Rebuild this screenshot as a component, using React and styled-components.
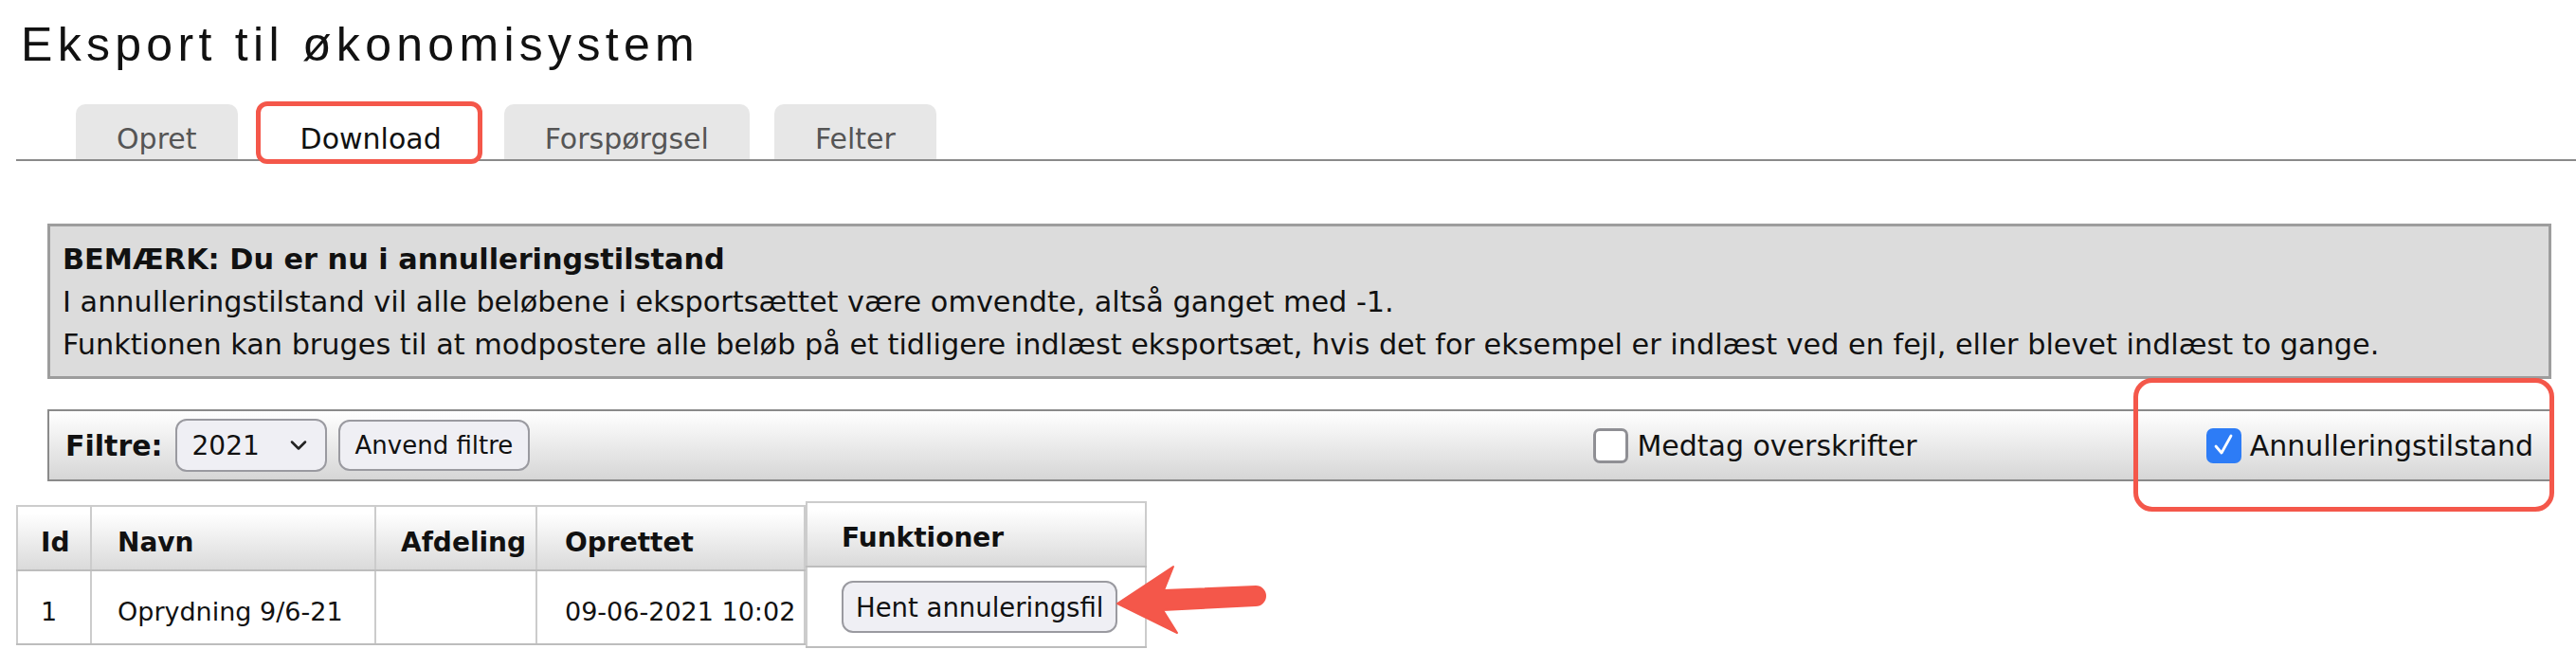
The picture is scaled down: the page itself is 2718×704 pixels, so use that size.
import React from "react";
import styled, { createGlobalStyle, css } from "styled-components";
import { ChevronDown } from "lucide-react";

const GlobalStyle = createGlobalStyle`
  html, body { margin: 0; padding: 0; background: #fff; }
  body { font-family: "DejaVu Sans", Verdana, sans-serif; color: #111; }
  * { box-sizing: border-box; }
`;

const RED = "#f4574a";

const Page = styled.div`
  width: 2718px;
  padding-left: 17px;
`;

const Title = styled.h1`
  margin: 22px 0 0 5px;
  font: 400 50px/50px "Liberation Sans", Arial, sans-serif;
  letter-spacing: 5.3px;
  color: #111;
`;

const TabBar = styled.nav`
  margin-top: 38px;
  display: flex;
  gap: 26px;
  padding-left: 63px;
  border-bottom: 2px solid #8a8a8a;
`;

const Tab = styled.div`
  position: relative;
  height: 58px;
  display: flex;
  align-items: flex-end;
  padding: 0 ${(p) => (p.$active ? 40 : 43)}px 6px;
  font-size: 30px;
  line-height: 30px;
  border-radius: 10px 10px 0 0;
  background: ${(p) => (p.$active ? "#fff" : "#e7e7e7")};
  color: ${(p) => (p.$active ? "#111" : "#555")};
  ${(p) =>
    p.$active &&
    css`
      &::after {
        content: "";
        position: absolute;
        inset: -3px -3px -5px -7px;
        border: 5px solid ${RED};
        border-radius: 12px;
      }
    `}
`;

const Notice = styled.div`
  margin: 66px 26px 0 33px;
  border: 3px solid #9d9d9d;
  background: #dcdcdc;
  padding: 12px 13px 11px;
  font-size: 30.3px;
  line-height: 45px;
`;

const NoticeLine = styled.div`
  font-weight: ${(p) => (p.$bold ? 700 : 400)};
  white-space: nowrap;
`;

const FilterBar = styled.div`
  position: relative;
  margin: 32px 26px 0 33px;
  height: 76px;
  border: 2px solid #8a8a8a;
  background: linear-gradient(#ffffff, #d6d6d6);
  display: flex;
  align-items: center;
  padding: 0 17px;
  font-size: 30px;
`;

const FilterLabel = styled.span`
  font-weight: 700;
`;

const SelectBox = styled.div`
  margin-left: 13px;
  width: 160px;
  height: 56px;
  border: 2px solid #9a9aa0;
  border-radius: 12px;
  background: #efeff4;
  display: flex;
  align-items: center;
  justify-content: space-between;
  padding: 0 14px 0 16px;
  font-size: 28px;
`;

const Button = styled.button`
  height: ${(p) => p.$h || 54}px;
  margin-left: ${(p) => p.$ml || 0}px;
  padding: 0 ${(p) => p.$px || 14}px;
  border: 2px solid #9a9aa0;
  border-radius: 12px;
  background: #efeff4;
  font-family: "DejaVu Sans", Verdana, sans-serif;
  font-size: ${(p) => p.$fs || 26}px;
  color: #111;
  white-space: nowrap;
`;

const Options = styled.div`
  margin-left: auto;
  display: flex;
  align-items: center;
  gap: 305px;
`;

const CheckLabel = styled.label`
  display: flex;
  align-items: center;
  gap: 9px;
  font-size: 30px;
`;

const CheckBox = styled.span`
  width: 37px;
  height: 37px;
  border-radius: 7px;
  display: flex;
  align-items: center;
  justify-content: center;
  border: ${(p) => (p.$checked ? "none" : "3px solid #8f8f94")};
  background: ${(p) => (p.$checked ? "#2d7cf6" : "#fff")};
`;

const Highlight = styled.div`
  position: absolute;
  right: -5px;
  top: -35px;
  width: 444px;
  height: 141px;
  border: 5px solid ${RED};
  border-radius: 20px;
  pointer-events: none;
`;

const TableArea = styled.div`
  position: relative;
  margin-top: 21px;
  display: flex;
  align-items: center;
  width: max-content;
`;

const Table = styled.table`
  border-collapse: collapse;
  table-layout: fixed;
  font-size: 27px;
  background: #fff;
`;

const Th = styled.th`
  height: ${(p) => p.$h || 68}px;
  padding: ${(p) => p.$pt || 0}px ${(p) => p.$pr ?? 8}px 0 ${(p) => p.$pl || 24}px;
  text-align: left;
  font-size: 28px;
  font-weight: 700;
  white-space: nowrap;
  overflow: hidden;
  background: linear-gradient(#ffffff 10%, #dadada);
  border: 2px solid #cccccc;
  border-bottom-color: #bdbdbd;
`;

const Td = styled.td`
  height: ${(p) => p.$h || 78}px;
  padding: ${(p) => p.$pt || 0}px ${(p) => p.$pr ?? 8}px 0 ${(p) => p.$pl || 24}px;
  white-space: nowrap;
  overflow: hidden;
  border: 2px solid #cccccc;
  border-bottom-color: #bdbdbd;
`;

const Arrow = styled.svg`
  position: absolute;
  left: 1155px;
  top: 63px;
  overflow: visible;
`;

function Check({ checked, children }) {
  return (
    <CheckLabel>
      <CheckBox $checked={checked}>
        {checked && (
          <svg width="28" height="28" viewBox="0 0 28 28">
            <path d="M6 15 L12 22 L22 4" fill="none" stroke="#fff" strokeWidth="2.8" strokeLinecap="round" strokeLinejoin="round" />
          </svg>
        )}
      </CheckBox>
      {children}
    </CheckLabel>
  );
}

const columns = [
  { key: "id", label: "Id", w: 78, pl: 24 },
  { key: "navn", label: "Navn", w: 300, pl: 27 },
  { key: "afd", label: "Afdeling", w: 170, pl: 26, pr: 4 },
  { key: "opr", label: "Oprettet", w: 283, pl: 29, pr: 2 },
];

const rows = [{ id: "1", navn: "Oprydning 9/6-21", afd: "", opr: "09-06-2021 10:02" }];

export default function App() {
  return (
    <>
      <GlobalStyle />
      <Page>
        <Title>Eksport til økonomisystem</Title>
        <TabBar>
          <Tab>Opret</Tab>
          <Tab $active>Download</Tab>
          <Tab>Forspørgsel</Tab>
          <Tab>Felter</Tab>
        </TabBar>

        <Notice>
          <NoticeLine $bold>BEMÆRK: Du er nu i annulleringstilstand</NoticeLine>
          <NoticeLine>I annulleringstilstand vil alle beløbene i eksportsættet være omvendte, altså ganget med -1.</NoticeLine>
          <NoticeLine>
            Funktionen kan bruges til at modpostere alle beløb på et tidligere indlæst eksportsæt, hvis det for eksempel er indlæst ved en fejl, eller blevet indlæst to gange.
          </NoticeLine>
        </Notice>

        <FilterBar>
          <FilterLabel>Filtre:</FilterLabel>
          <SelectBox>
            <span>2021</span>
            <ChevronDown size={28} strokeWidth={2.2} color="#222" />
          </SelectBox>
          <Button $ml={12} $px={16}>Anvend filtre</Button>
          <Options>
            <Check>Medtag overskrifter</Check>
            <Check checked>Annulleringstilstand</Check>
          </Options>
          <Highlight />
        </FilterBar>

        <TableArea>
          <Table>
            <colgroup>
              {columns.map((c) => (
                <col key={c.key} style={{ width: c.w }} />
              ))}
            </colgroup>
            <thead>
              <tr>
                {columns.map((c) => (
                  <Th key={c.key} $pl={c.pl} $pr={c.pr} $pt={10}>
                    {c.label}
                  </Th>
                ))}
              </tr>
            </thead>
            <tbody>
              {rows.map((r) => (
                <tr key={r.id}>
                  {columns.map((c) => (
                    <Td key={c.key} $pl={c.pl} $pr={c.pr} $pt={10}>
                      {r[c.key]}
                    </Td>
                  ))}
                </tr>
              ))}
            </tbody>
          </Table>
          <Table>
            <colgroup>
              <col style={{ width: 358 }} />
            </colgroup>
            <thead>
              <tr>
                <Th $h={68} $pl={36} $pt={6}>Funktioner</Th>
              </tr>
            </thead>
            <tbody>
              <tr>
                <Td $h={85} $pl={36}>
                  <Button $h={55} $px={13} $fs={27.5}>Hent annuleringsfil</Button>
                </Td>
              </tr>
            </tbody>
          </Table>
          <Arrow width="160" height="90" viewBox="0 0 160 90">
            <path
              d="M7 45 L66 6 L56 31 L153 27 A10 10 0 0 1 153 47 L55 52 L70 76 Z"
              fill={RED}
              stroke={RED}
              strokeWidth="2"
              strokeLinejoin="round"
            />
          </Arrow>
        </TableArea>
      </Page>
    </>
  );
}
